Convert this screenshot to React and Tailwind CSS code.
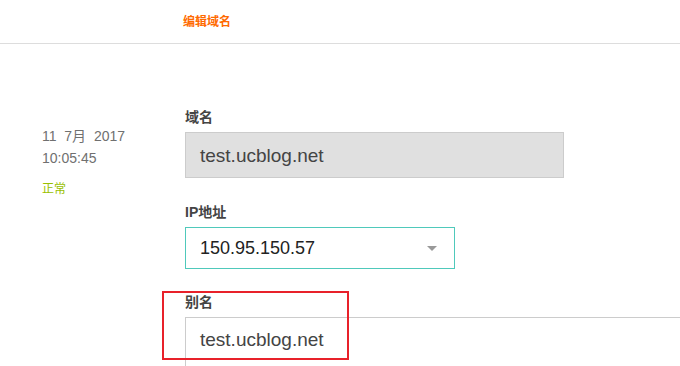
export default function App() {
  return (
    <div className="relative h-[366px] w-[680px] overflow-hidden bg-white font-['Liberation_Sans','Noto_Sans_CJK_SC',sans-serif] text-[#333]">
      <div className="flex h-[44px] items-center border-b border-[#dddddd] pl-[183px]">
        <span className="text-[12px] font-bold text-[#ff6a00]">编辑域名</span>
      </div>

      <div className="flex">
        <div className="w-[185px] shrink-0 pl-[42px] pt-[81px]">
          <div className="whitespace-pre text-[14px] leading-[22px] text-[#707070]">11  7月  2017</div>
          <div className="text-[14px] leading-[22px] text-[#707070]">10:05:45</div>
          <div className="mt-[10px] text-[12px] leading-[20px] text-[#99bf00]">正常</div>
        </div>

        <div className="flex-1 pt-[63px]">
          <label className="block text-[14px] font-bold leading-[20px] text-[#444]">域名</label>
          <div className="mt-[5px] h-[46px] w-[379px] border border-[#cccccc] bg-[#e0e0e0] pl-[14px] pt-[9px] text-[19px] text-[#444]">
            test.ucblog.net
          </div>

          <label className="mt-[24px] block text-[14px] font-bold leading-[20px] text-[#444]">IP地址</label>
          <div className="mt-[5px] flex h-[42px] w-[270px] items-center justify-between border border-[#4fc9bb] pl-[14px] pr-[17px] text-[18px] text-[#222]">
            <span>150.95.150.57</span>
            <span className="h-0 w-0 border-x-[5px] border-t-[5px] border-x-transparent border-t-[#999]"></span>
          </div>

          <label className="mt-[23px] block text-[14px] font-bold leading-[20px] text-[#444]">别名</label>
          <div className="mt-[5px] h-[60px] w-[560px] border border-[#cccccc] pl-[14px] pt-[8px] text-[19px] text-[#444]">
            test.ucblog.net
          </div>
        </div>
      </div>

      <div className="absolute left-[162px] top-[291px] h-[69px] w-[187px] border-2 border-[#e8212a]"></div>
    </div>
  );
}
